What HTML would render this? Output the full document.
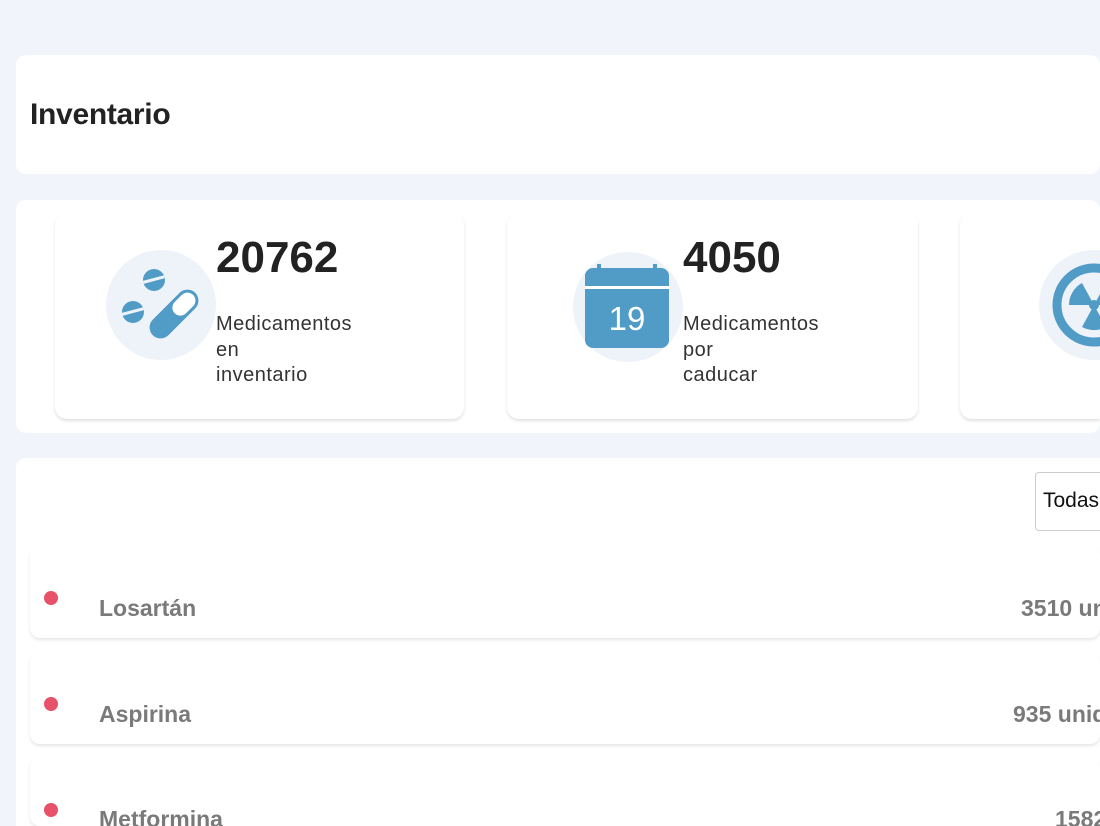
<!DOCTYPE html>
<html style="overflow:hidden;width:1100px;height:826px"><head><meta charset="utf-8"><style>
body{margin:0;width:1100px;height:826px;overflow:hidden;background:#f1f4fb;font-family:"Liberation Sans",sans-serif;position:relative}
.abs{position:absolute}
.card{background:#fff;border-radius:10px}
.stat{background:#fff;border-radius:12px;box-shadow:0 2px 3px rgba(0,0,0,.12);top:213px;height:206px}
.circ{border-radius:50%;background:#eef3fa;width:110px;height:110px}
.num{font-size:44px;font-weight:bold;color:#222}
.lab{font-size:20px;color:#333;line-height:25.5px;letter-spacing:0.5px}
.row{background:#fff;border-radius:10px;box-shadow:0 2px 3px rgba(0,0,0,.1);left:30px;width:1070px;height:92px}
.dot{width:14px;height:14px;border-radius:50%;background:#e8516a}
.name{font-size:23px;color:#7a7a7a;font-weight:bold;white-space:nowrap}
</style></head><body>
<div class="abs card" style="left:16px;top:55px;width:1084px;height:119px"></div>
<div class="abs" style="left:30px;top:98px;font-size:30px;color:#222;font-weight:bold;letter-spacing:-0.3px">Inventario</div>
<div class="abs card" style="left:16px;top:200px;width:1084px;height:233px"></div>

<div class="abs stat" style="left:55px;width:409px"></div>
<div class="abs circ" style="left:106px;top:250px"></div>
<svg class="abs" style="left:118px;top:262px" width="86" height="86" viewBox="0 0 86 86">
<circle cx="36" cy="18" r="11" fill="#519bc7"/><rect x="25" y="16" width="22" height="3" fill="#eef3fa" transform="rotate(-15 36 18)"/>
<circle cx="15" cy="50" r="11" fill="#519bc7"/><rect x="4" y="48" width="22" height="3" fill="#eef3fa" transform="rotate(-15 15 50)"/>
<g transform="rotate(45 56 52)"><rect x="45" y="22" width="22" height="60" rx="11" fill="#519bc7"/><rect x="48" y="25" width="16" height="26" rx="8" fill="#fff"/></g>
</svg>
<div class="abs num" style="left:216px;top:233px">20762</div>
<div class="abs lab" style="left:216px;top:312px">Medicamentos<br>en<br>inventario</div>

<div class="abs stat" style="left:507px;width:411px"></div>
<div class="abs circ" style="left:573px;top:252px"></div>
<svg class="abs" style="left:585px;top:264px" width="84" height="86" viewBox="0 0 84 86">
<rect x="0" y="4" width="84" height="80" rx="8" fill="#519bc7"/><rect x="0" y="22" width="84" height="3" fill="#fff"/>
<rect x="12" y="0" width="4" height="8" fill="#519bc7"/><rect x="68" y="0" width="4" height="8" fill="#519bc7"/>
<text x="42" y="66" text-anchor="middle" font-family="Liberation Sans" font-size="33" fill="#fff">19</text></svg>
<div class="abs num" style="left:683px;top:233px">4050</div>
<div class="abs lab" style="left:683px;top:312px">Medicamentos<br>por<br>caducar</div>

<div class="abs stat" style="left:960px;width:140px;border-radius:12px 0 0 12px"></div>
<div class="abs circ" style="left:1039px;top:250px;width:61px;border-radius:55px 0 0 55px"></div>
<svg class="abs" style="left:1052px;top:263px" width="48" height="84" viewBox="0 0 48 84">
<circle cx="42" cy="42" r="37" fill="none" stroke="#519bc7" stroke-width="9"/>
<circle cx="42" cy="42" r="5" fill="#519bc7"/>
<path d="M42 42 L30 20 A25 25 0 0 0 17 42Z" fill="#519bc7"/><path d="M42 42 L30 64 A25 25 0 0 0 54 64Z" fill="#519bc7"/><path d="M42 42 L54 20 A25 25 0 0 1 67 42Z" fill="#519bc7"/>
</svg>

<div class="abs card" style="left:16px;top:458px;width:1084px;height:368px;border-radius:10px 0 0 0"></div>
<div class="abs" style="left:1035px;top:472px;width:65px;height:57px;border:1px solid #ccc;border-right:none;border-radius:4px 0 0 4px;background:#fff;overflow:hidden"><div style="padding:16px 0 0 7px;font-size:21px;color:#111">Todas</div></div>

<div class="abs row" style="top:546px"></div>
<div class="abs dot" style="left:44px;top:591px"></div>
<div class="abs name" style="left:99px;top:595px">Losartán</div>
<div class="abs" style="left:1021px;top:595px;width:79px;overflow:hidden"><div class="name">3510 unidades</div></div>

<div class="abs row" style="top:652px"></div>
<div class="abs dot" style="left:44px;top:697px"></div>
<div class="abs name" style="left:99px;top:701px">Aspirina</div>
<div class="abs" style="left:1013px;top:701px;width:87px;overflow:hidden"><div class="name">935 unidades</div></div>

<div class="abs row" style="top:758px;height:68px"></div>
<div class="abs dot" style="left:44px;top:803px"></div>
<div class="abs name" style="left:99px;top:806px">Metformina</div>
<div class="abs" style="left:1055px;top:806px;width:45px;overflow:hidden"><div class="name">1582 unidades</div></div>
</body></html>
